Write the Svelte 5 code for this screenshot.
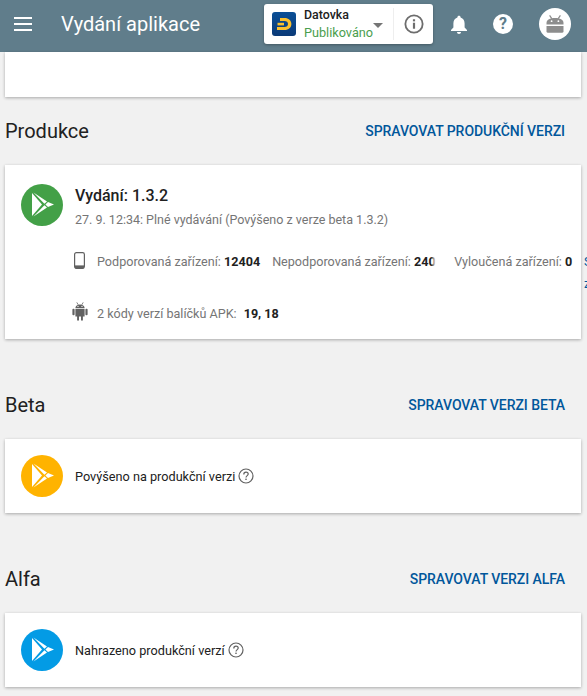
<script>
  const tracks = [
    { name: 'Beta', action: 'SPRAVOVAT VERZI BETA', color: '#ffb300', text: 'Povýšeno na produkční verzi' },
    { name: 'Alfa', action: 'SPRAVOVAT VERZI ALFA', color: '#039be5', text: 'Nahrazeno produkční verzí' }
  ];
</script>

{#snippet playIcon(color)}
  <svg class="track-icon" width="42" height="42" viewBox="0 0 42 42">
    <circle cx="21" cy="21" r="21" fill={color} />
    <path d="M11 9 L21 20.5 L11 32 Z" fill="#fff" />
    <path d="M12.5 8.5 L26 17.6 L23.4 19.8 Z M12.5 32.5 L26 23.4 L23.4 21.2 Z" fill="#fff" />
    <path d="M27 18 L33 20.5 L27 23 L24.4 20.5 Z" fill="#fff" />
  </svg>
{/snippet}

{#snippet helpIcon()}
  <svg class="help" width="16" height="16" viewBox="0 0 16 16">
    <circle cx="8" cy="8" r="7" fill="none" stroke="#616161" stroke-width="1.2" />
    <path d="M5.8 6.4 C5.8 5 6.8 4.2 8 4.2 C9.3 4.2 10.2 5 10.2 6.1 C10.2 7.6 8 7.7 8 9.6" fill="none" stroke="#616161" stroke-width="1.2" />
    <rect x="7.3" y="10.6" width="1.4" height="1.4" fill="#616161" />
  </svg>
{/snippet}

<div class="page">
  <header class="topbar">
    <button class="menu" aria-label="Menu">
      <span></span><span></span><span></span>
    </button>
    <h1>Vydání aplikace</h1>
    <div class="app-switch">
      <svg class="app-logo" width="24" height="24" viewBox="0 0 24 24">
        <defs>
          <linearGradient id="logo-bg" x1="0" y1="0" x2="0" y2="1">
            <stop offset="0" stop-color="#0a4f96" />
            <stop offset="1" stop-color="#0b3a78" />
          </linearGradient>
        </defs>
        <rect width="24" height="24" rx="3" fill="url(#logo-bg)" />
        <path d="M8 6 H12.5 C16.6 6 19.4 8.6 19.4 12 C19.4 15.6 16.6 18 12.5 18 H5 V15 H12.5 C14.7 15 16 13.8 16 12 C16 10.2 14.7 9 12.5 9 H8 Z" fill="#fbc02d" />
        <path d="M5.5 10.8 H12 V13.4 H5.5 Z" fill="#fbc02d" />
      </svg>
      <div class="app-name">
        <strong>Datovka</strong>
        <span>Publikováno</span>
      </div>
      <i class="caret"></i>
      <div class="divider"></div>
      <svg width="20" height="20" viewBox="0 0 22 22">
        <circle cx="11" cy="11" r="9.5" fill="none" stroke="#6d6d6d" stroke-width="2" />
        <rect x="9.8" y="9.6" width="2.4" height="6.6" fill="#6d6d6d" />
        <rect x="9.8" y="5.8" width="2.4" height="2.3" fill="#6d6d6d" />
      </svg>
    </div>
    <svg class="bell" width="18" height="20" viewBox="0 0 18 20">
      <path d="M9 0.8 C10 0.8 10.6 1.5 10.6 2.4 C13.4 3.2 14.6 5.6 14.6 8.4 V12.6 L17 15 V16 H1 V15 L3.4 12.6 V8.4 C3.4 5.6 4.6 3.2 7.4 2.4 C7.4 1.5 8 0.8 9 0.8 Z" fill="#fff" />
      <path d="M7 17 H11 C11 18.2 10.1 19 9 19 C7.9 19 7 18.2 7 17 Z" fill="#fff" />
    </svg>
    <div class="help-round">?</div>
    <div class="avatar">
      <svg width="18" height="18" viewBox="0 0 18 18">
        <path d="M0.5 8 C0.5 4.8 4 3 9 3 C14 3 17.5 4.8 17.5 8 V9.4 H0.5 Z" fill="#8d8d8d" />
        <path d="M3.6 0.4 L5.8 3.6 M14.4 0.4 L12.2 3.6" stroke="#8d8d8d" stroke-width="1.2" />
        <path d="M0.5 11 H17.5 V16.6 C17.5 17.3 17 17.8 16.3 17.8 H1.7 C1 17.8 0.5 17.3 0.5 16.6 Z" fill="#8d8d8d" />
        <circle cx="5.6" cy="6.2" r="0.9" fill="#fff" />
        <circle cx="12.4" cy="6.2" r="0.9" fill="#fff" />
      </svg>
    </div>
  </header>

  <main>
    <div class="card stub"></div>

    <section class="head first">
      <h2>Produkce</h2>
      <span class="action">SPRAVOVAT PRODUKČNÍ VERZI</span>
    </section>

    <div class="card release">
      {@render playIcon('#43a047')}
      <div class="release-body">
        <h3>Vydání: 1.3.2</h3>
        <p class="sub">27. 9. 12:34: Plné vydávání (Povýšeno z verze beta 1.3.2)</p>
        <div class="stats">
          <svg class="stat-icon" width="11" height="17" viewBox="0 0 11 17">
            <rect x="0.6" y="0.6" width="9.8" height="15.8" rx="1.8" fill="none" stroke="#616161" stroke-width="1.2" />
            <rect x="1" y="13.4" width="9" height="3" fill="#616161" />
          </svg>
          <span class="stat">Podporovaná zařízení: <b>12404</b></span>
          <span class="stat unsupported">Nepodporovaná zařízení: <b>240</b></span>
          <span class="stat excluded">Vyloučená zařízení: <b>0</b></span>
        </div>
        <div class="apk">
          <svg class="apk-icon" width="16" height="19" viewBox="0 0 16 19">
            <path d="M3.4 6 C3.5 3.6 5.4 2.4 8 2.4 C10.6 2.4 12.5 3.6 12.6 6 Z" fill="#616161" />
            <path d="M4.8 0.4 L6.2 2.8 M11.2 0.4 L9.8 2.8" stroke="#616161" stroke-width="0.8" />
            <path d="M3.4 6.8 H12.6 V14.4 H10.9 V18.4 H9 V14.4 H7 V18.4 H5.1 V14.4 H3.4 Z" fill="#616161" />
            <rect x="0.4" y="6.8" width="2.2" height="6.4" rx="1" fill="#616161" />
            <rect x="13.4" y="6.8" width="2.2" height="6.4" rx="1" fill="#616161" />
            <circle cx="6" cy="4.4" r="0.6" fill="#fff" />
            <circle cx="10" cy="4.4" r="0.6" fill="#fff" />
          </svg>
          <span class="stat">2 kódy verzí balíčků APK:</span>
          <b>19, 18</b>
        </div>
      </div>
      <div class="overflow-link">S<br />z</div>
    </div>

    {#each tracks as track}
      <section class="head">
        <h2>{track.name}</h2>
        <span class="action">{track.action}</span>
      </section>
      <div class="card track">
        {@render playIcon(track.color)}
        <span class="track-text">{track.text}</span>
        {@render helpIcon()}
      </div>
    {/each}
  </main>
</div>

<style>
  :global(body) {
    background: #f1f1f1;
    font-family: Roboto, "Liberation Sans", sans-serif;
    overflow: hidden;
  }

  .page {
    height: 696px;
    overflow: hidden;
  }

  .topbar {
    height: 52px;
    box-sizing: border-box;
    padding-bottom: 4px;
    background: #607d8b;
    display: flex;
    align-items: center;
    color: #fff;
  }

  .menu {
    width: 18px;
    height: 14px;
    margin-left: 14px;
    padding: 0;
    border: none;
    background: none;
    display: flex;
    flex-direction: column;
    justify-content: space-between;
  }

  .menu span {
    display: block;
    height: 2px;
    background: #fff;
  }

  h1 {
    margin: 0 0 0 29px;
    width: 203px;
    font-size: 20px;
    font-weight: 400;
  }

  .app-switch {
    width: 169px;
    height: 40px;
    background: #fff;
    border-radius: 3px;
    display: flex;
    align-items: center;
    box-shadow: 0 1px 3px rgba(0, 0, 0, 0.3);
    box-sizing: border-box;
    padding-left: 8px;
  }

  .app-logo {
    flex: none;
  }

  .app-name {
    margin-left: 8px;
    width: 69px;
    display: flex;
    flex-direction: column;
    line-height: 18px;
  }

  .app-name strong {
    font-size: 12.4px;
    font-weight: 500;
    color: #212121;
  }

  .app-name span {
    color: #4a9e4e;
    white-space: nowrap;
    font-size: 12.7px;
  }

  .caret {
    width: 0;
    height: 0;
    border-left: 5px solid transparent;
    border-right: 5px solid transparent;
    border-top: 5px solid #757575;
    margin-left: 0;
    margin-top: 2px;
  }

  .divider {
    width: 1px;
    height: 32px;
    background: #eeeeee;
    margin: 0 10px 0 10px;
  }

  .bell {
    margin-left: 17px;
    margin-top: 1px;
  }

  .help-round {
    width: 20px;
    height: 20px;
    margin-left: 25px;
    border-radius: 50%;
    background: #fff;
    color: #607d8b;
    font-size: 16px;
    font-weight: 700;
    line-height: 20px;
    text-align: center;
  }

  .avatar {
    width: 32px;
    height: 32px;
    margin-left: 26px;
    border-radius: 50%;
    background: #fff;
    display: flex;
    align-items: center;
    justify-content: center;
  }

  main {
    padding: 0 6px 0 5px;
  }

  .card {
    background: #fff;
    box-shadow: 0 1px 3px rgba(0, 0, 0, 0.3);
  }

  .stub {
    height: 45px;
  }

  .head {
    height: 68px;
    margin-top: 32px;
    display: flex;
    align-items: center;
    justify-content: space-between;
    padding-right: 16px;
  }

  .head.first {
    margin-top: 0;
  }

  .head h2 {
    margin: 0;
    font-size: 20px;
    font-weight: 400;
    color: #212121;
  }

  .action {
    font-size: 14px;
    font-weight: 500;
    letter-spacing: -0.05px;
    color: #01579b;
  }

  .release {
    height: 174px;
    display: flex;
    padding: 19px 0 0 16px;
    box-sizing: border-box;
    position: relative;
  }

  .track-icon {
    flex: none;
  }

  .release-body {
    margin-left: 12px;
    min-width: 0;
  }

  h3 {
    margin: 0;
    padding-top: 2px;
    font-size: 16px;
    line-height: 20px;
    font-weight: 500;
    color: #212121;
  }

  .sub {
    margin: 5px 0 0;
    font-size: 12.5px;
    line-height: 18px;
    color: #757575;
    white-space: nowrap;
  }

  .stats {
    display: flex;
    align-items: center;
    margin-top: 23px;
    white-space: nowrap;
    height: 18px;
  }

  .stat-icon {
    margin: 0 12px 1px -1px;
  }

  .stat {
    color: #757575;
    font-size: 12.6px;
  }

  .stat b,
  .apk b {
    font-weight: 700;
    color: #212121;
  }

  .unsupported {
    margin-left: 12px;
    width: 164px;
    overflow: hidden;
    flex: none;
    position: relative;
  }

  .unsupported::after {
    content: '';
    position: absolute;
    right: 0;
    top: 0;
    bottom: 0;
    width: 5px;
    background: linear-gradient(to right, rgba(255, 255, 255, 0), #fff);
  }

  .excluded {
    margin-left: 18px;
  }

  .apk {
    display: flex;
    align-items: center;
    margin-top: 34px;
    height: 18px;
    font-size: 12.6px;
    white-space: nowrap;
  }

  .apk-icon {
    margin: 0 9px 3px -3px;
  }

  .apk b {
    margin-left: 7px;
  }

  .overflow-link {
    position: absolute;
    left: 579px;
    top: 86px;
    font-size: 12.5px;
    line-height: 22px;
    color: #01579b;
  }

  .track {
    height: 74px;
    display: flex;
    align-items: center;
    padding-left: 16px;
    box-sizing: border-box;
  }

  .track-text {
    margin-left: 12px;
    font-size: 12.7px;
    color: #212121;
  }

  .help {
    margin-left: 3px;
  }
</style>
